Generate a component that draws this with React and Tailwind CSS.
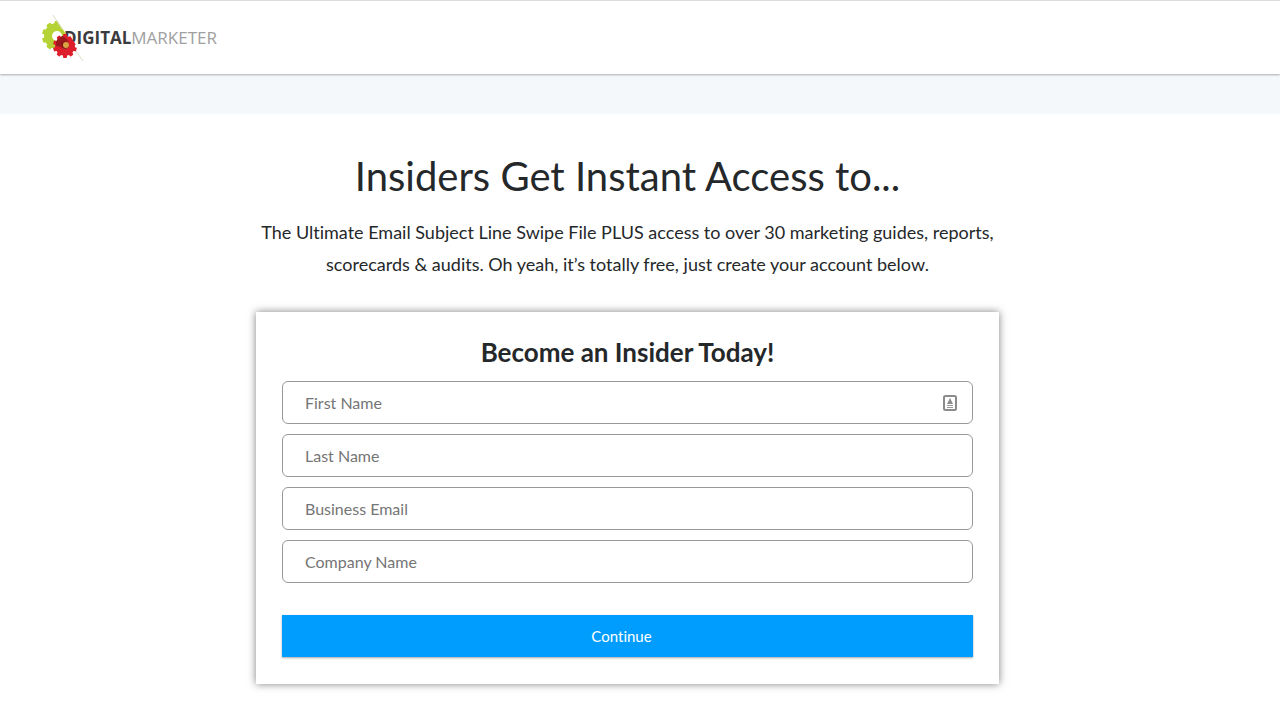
import React, { useState } from 'react';

const fields = [
  { id: 'firstName', label: 'First Name', type: 'text', autofill: true },
  { id: 'lastName', label: 'Last Name', type: 'text' },
  { id: 'email', label: 'Business Email', type: 'email' },
  { id: 'company', label: 'Company Name', type: 'text' },
];

const teeth = [0, 36, 72, 108, 144, 180, 216, 252, 288, 324];

const Gear = ({ cx, cy, r, hole, tooth }) => (
  <g transform={`translate(${cx} ${cy})`}>
    <circle r={(r + hole) / 2} fill="none" stroke="currentColor" strokeWidth={r - hole} />
    {teeth.map((angle) => (
      <rect
        key={angle}
        x={-tooth / 2}
        y={-r - 2}
        width={tooth}
        height="4"
        rx="1"
        fill="currentColor"
        transform={`rotate(${angle})`}
      />
    ))}
  </g>
);

const LogoMark = () => (
  <svg viewBox="0 0 42 48" className="relative z-10 h-12 w-[42px] shrink-0" aria-hidden="true">
    <defs>
      <clipPath id="cut">
        <path d="M0 0H11L42 48H0Z" />
      </clipPath>
      <clipPath id="cut-front">
        <path d="M0 0H14L45 48H0Z" />
      </clipPath>
    </defs>
    <g clipPath="url(#cut)" className="text-[#b5d334]">
      <Gear cx={15} cy={22} r={13} hole={5} tooth={5} />
    </g>
    <g clipPath="url(#cut-front)" className="text-[#dc1f2b]">
      <Gear cx={23} cy={32} r={10} hole={3} tooth={4} />
      <path d="M14 28a10 10 0 0 1 7-6l6 5a6 6 0 0 0-8 6l-5-1Z" fill="#9c1a1d" />
      <circle cx="23" cy="31" r="4" fill="#8d1718" />
      <circle cx="24" cy="31" r="3" fill="#d9a441" />
    </g>
    <path d="M11 1L20 15M34 37L41 47" stroke="#dcdcc4" strokeWidth="1" />
  </svg>
);

const AutofillIcon = () => (
  <svg viewBox="0 0 14 16" className="h-4 w-3.5" fill="none" aria-hidden="true">
    <rect x="1" y="1" width="12" height="14" rx="1.5" stroke="#8b8b8b" strokeWidth="2" />
    <path d="M7 3L8.500 6L10 9H4L5.500 6Z" fill="#8b8b8b" />
    <path d="M4 10.500h6M4 12.500h6" stroke="#9a9a9a" />
  </svg>
);

const App = () => {
  const [values, setValues] = useState({});

  return (
    <div className="min-h-screen bg-white font-[Lato,sans-serif] text-[#25282a]">
      <header className="relative border-t border-[#dcdcdc] bg-white pt-[13px] pb-3 pl-[42px] shadow-[0_1px_2px_rgba(0,0,0,0.3)]">
        <a href="#" className="inline-flex items-center align-top" aria-label="DigitalMarketer">
          <LogoMark />
          <span className="-ml-5 font-['Open_Sans',sans-serif] text-[17px] leading-6">
            <span className="font-bold text-[#3b3b3d]">DIGITAL</span>
            <span className="text-[#a0a0a0]">MARKETER</span>
          </span>
        </a>
      </header>
      <div className="h-10 bg-[#f4f8fb]" />

      <main className="flex flex-col items-center pr-[25px] pt-9">
        <h1 className="text-center text-[40px] leading-[52px]">Insiders Get Instant Access to...</h1>
        <p className="mt-3.5 w-[744px] max-w-full text-center text-lg leading-8 [font-variant-ligatures:none]">
          The Ultimate Email Subject Line Swipe File PLUS access to over 30 marketing guides, reports,
          scorecards &amp; audits. Oh yeah, it’s totally free, just create your account below.
        </p>

        <form
          onSubmit={(event) => event.preventDefault()}
          className="mt-8 mb-9 w-[743px] max-w-full bg-white px-[26px] pt-6 pb-[27px] shadow-[0_0_8px_rgba(0,0,0,0.5)]"
        >
          <h2 className="text-center text-[26px] font-bold leading-8">Become an Insider Today!</h2>
          <div className="mt-[13px] flex flex-col gap-2.5">
            {fields.map((field) => (
              <div
                key={field.id}
                className="flex h-[43px] items-center rounded-md border border-[#999] pr-[15px]"
              >
                <input
                  id={field.id}
                  type={field.type}
                  aria-label={field.label}
                  placeholder={field.label}
                  value={values[field.id] || ''}
                  onChange={(event) => setValues({ ...values, [field.id]: event.target.value })}
                  className="h-full min-w-0 flex-1 bg-transparent pl-[22px] text-base outline-none placeholder:text-[#757575]"
                />
                {field.autofill ? <AutofillIcon /> : null}
              </div>
            ))}
          </div>
          <button
            type="submit"
            className="mt-8 h-[42px] w-full bg-[#009dff] pr-3 text-[15px] text-white shadow-[0_1px_2px_rgba(0,0,0,0.35)] [font-variant-ligatures:none]"
          >
            Continue
          </button>
        </form>
      </main>
    </div>
  );
};

export default App;
